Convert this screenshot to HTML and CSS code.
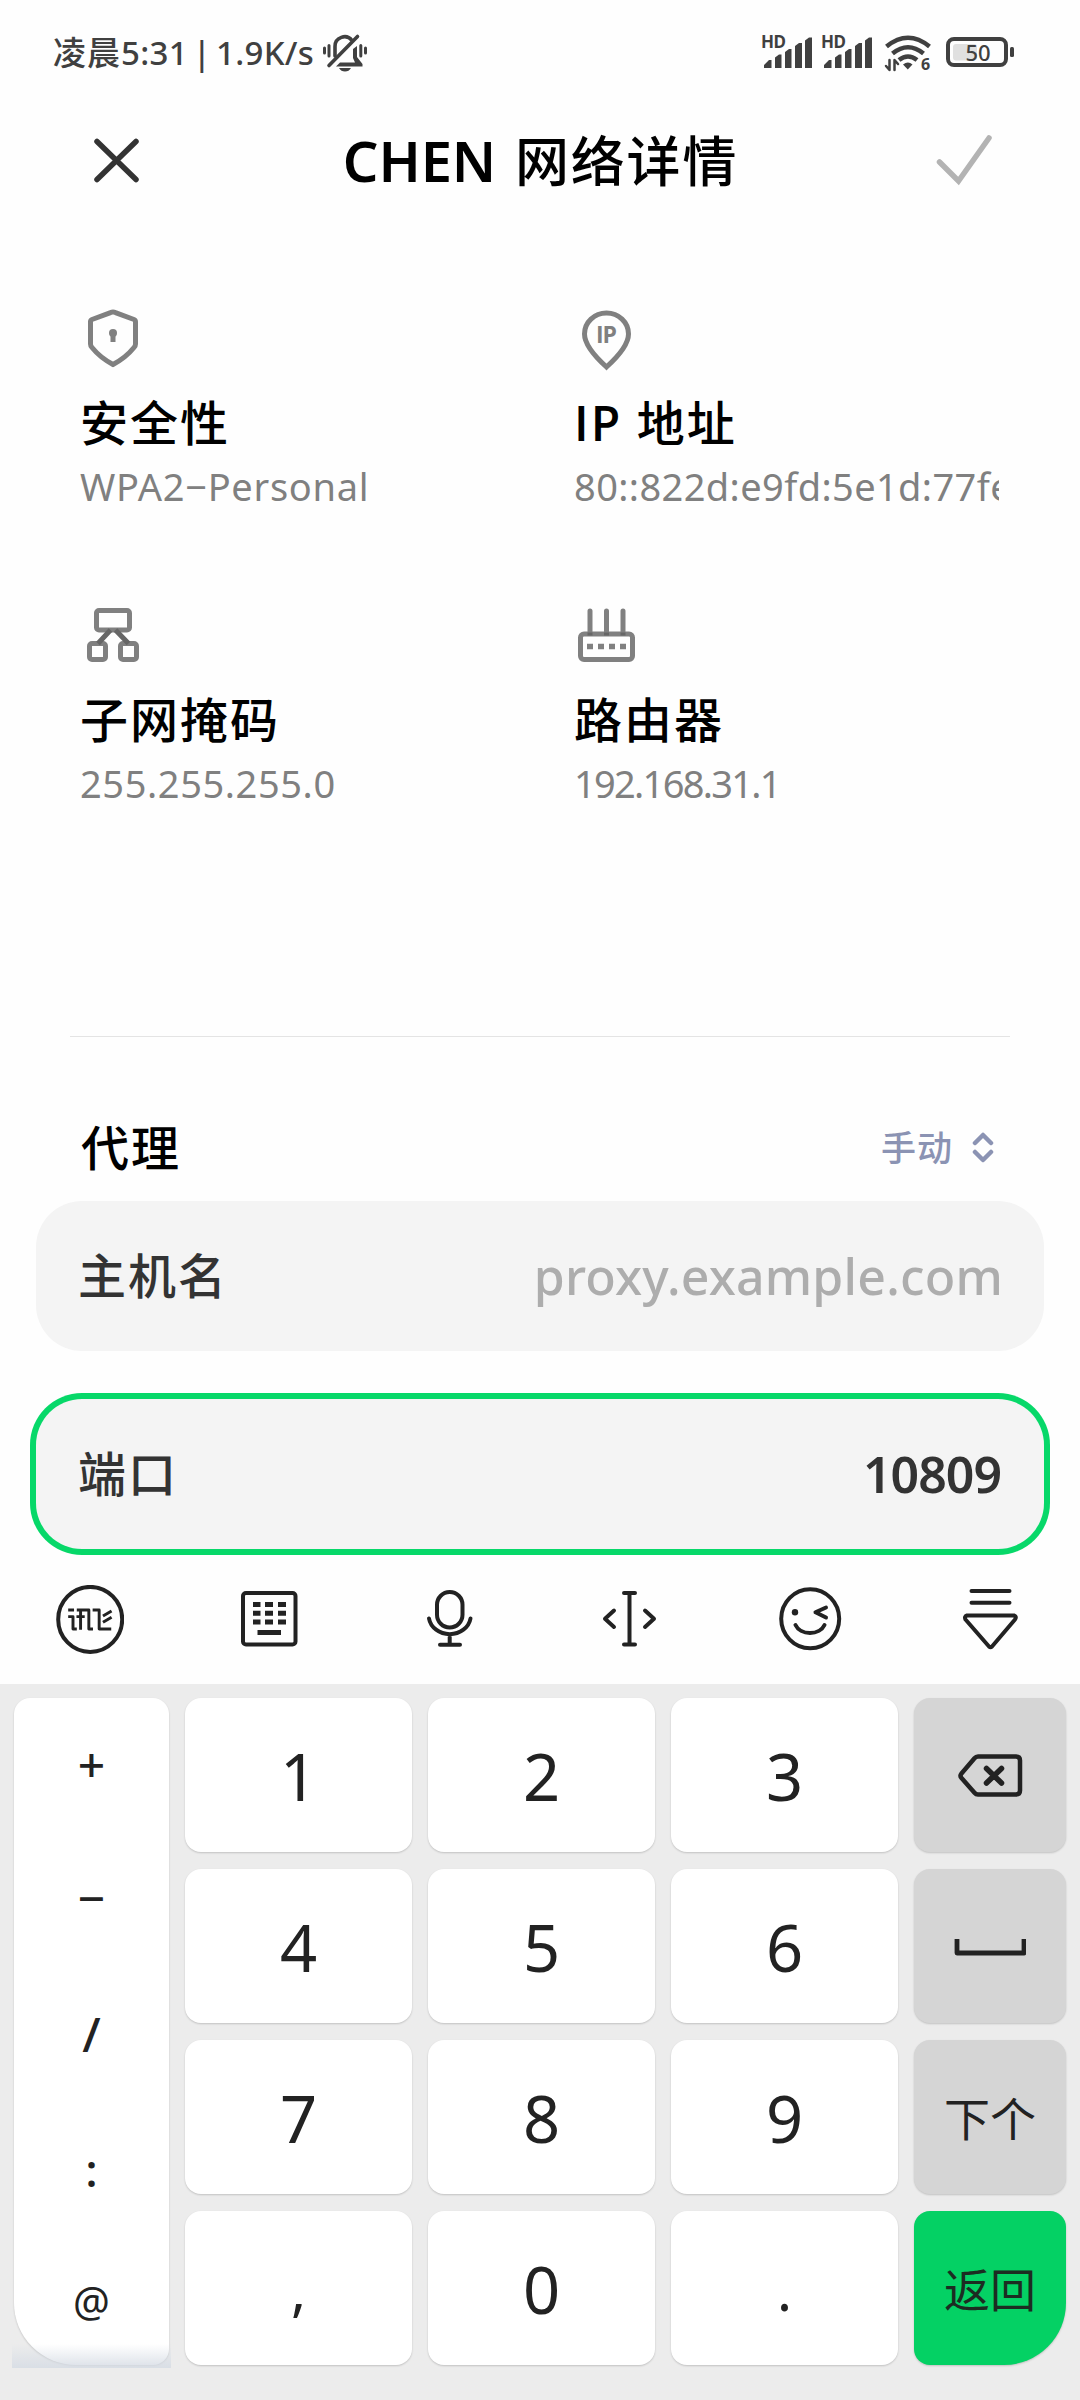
FILE: index.html
```html
<!DOCTYPE html>
<html lang="zh-CN">
<head>
<meta charset="utf-8">
<title>CHEN 网络详情</title>
<link rel="stylesheet" href="styles.css">
</head>
<body>
<header class="status">
  <span class="status-time">凌晨<span class="clock">5:31 | 1.9K/s</span></span>
  <svg class="bell" width="46" height="42" viewBox="322 32 46 42">
    <path d="M324.500 48v5M329 45.500v10.500M365.500 48v5M360.800 45.500v10.500" class="ln" stroke-width="3"/>
    <path d="M335 56V46.500a9.500 9.500 0 0 1 17-6" class="ln thick"/>
    <path d="M329 65.500 357.500 36.500" class="ln thick"/>
    <path d="M353 49l4-3v11l5.500 7v2.500H336l4-4h15L353 58z" class="fl"/>
    <path d="M339 68h12q-2 3.500-6 3.500t-6-3.500z" class="fl"/>
  </svg>
  <svg class="signals" width="262" height="42" viewBox="758 32 262 42">
    <g id="sim">
      <text x="761" y="48" class="hd" textLength="25">HD</text>
      <path class="fl" d="M764 68v-3l5-5h2.500v8zM775 68V57.500l4-3h2.500V68zM785 68V52l4-3h2.500v19zM795 68V46l4-3h3v25zM805 68V40.500l4-3h3V68z"/>
    </g>
    <use href="#sim" x="60"/>
    <g class="ln wifi">
      <path d="M886.500 46.500q21.500-17.500 43 0"/>
      <path d="M892.500 53.500q15.500-12.500 31 0"/>
      <path d="M899 60q9-7 18 0"/>
    </g>
    <path class="fl" d="M903 64.500q5-4 9.500 0l-4.700 5z"/>
    <path class="ln" stroke-width="2.500" stroke-linecap="butt" d="M889.500 60v10l-3.500-4M894.500 70V60l3.500 4"/>
    <text x="921" y="70" class="six">6</text>
    <rect x="948" y="39" width="58" height="26" rx="6" class="ln" stroke-width="4"/>
    <rect x="953" y="44" width="24" height="16.500" rx="3" fill="#e0e0e0"/>
    <text x="978" y="60.500" class="pct" text-anchor="middle">50</text>
    <rect x="1010" y="47" width="4" height="10" rx="1.500" class="fl"/>
  </svg>
</header>

<nav class="titlebar">
  <svg width="50" height="52" viewBox="92 134 50 52"><path d="M97 141.500 136 179.500M136 141.500 97 179.500" fill="none" stroke="#333" stroke-width="5.500" stroke-linecap="round"/></svg>
  <h1><span class="name">CHEN</span> 网络详情</h1>
  <svg width="60" height="54" viewBox="934 133 60 54"><path d="M939.500 162 958.500 181 989 138" fill="none" stroke="#b3b3b3" stroke-width="5.500" stroke-linecap="round"/></svg>
</nav>

<main class="info">
  <section class="item">
    <svg width="64" height="60" viewBox="80 308 64 60" class="ico">
      <path d="M110.500 312.600q2.500-1.200 5 0L134 319.500q1.500.6 1.500 2.300V344q0 2-1.500 3.500-8 10-21 17-13-7-21-17-1.500-1.500-1.500-3.500V321.800q0-1.700 1.500-2.300z"/>
      <circle cx="113" cy="333" r="4" class="solid"/><path d="M113 334v8"/>
    </svg>
    <h2>安全性</h2>
    <p class="wpa">WPA2−Personal</p>
  </section>
  <section class="item">
    <svg width="64" height="60" viewBox="574 308 64 60" class="ico">
      <path d="M606.500 367q22-20 22-33a22 21 0 0 0-44 0q0 13 22 33z"/>
      <text x="596" y="343" class="iptxt" textLength="21">IP</text>
    </svg>
    <h2><span class="lat">IP</span> 地址</h2>
    <p class="ip6">80::822d:e9fd:5e1d:77fe</p>
  </section>
  <section class="item">
    <svg width="64" height="60" viewBox="80 605 64 60" class="ico">
      <rect x="96.500" y="610.500" width="33" height="19.500" rx="2.500"/>
      <rect x="89.500" y="643.500" width="16" height="16" rx="2.500"/>
      <rect x="120.500" y="643.500" width="16" height="16" rx="2.500"/>
      <path d="M110.500 630 98 643.500M115.500 630 128.500 643.500" class="over"/>
    </svg>
    <h2>子网掩码</h2>
    <p class="mask">255.255.255.0</p>
  </section>
  <section class="item">
    <svg width="64" height="60" viewBox="574 605 64 60" class="ico">
      <rect x="580.500" y="634" width="52" height="25.500" rx="3.500"/>
      <path d="M590 611v20.500M606.500 611v20.500M623 611v20.500" stroke-linecap="round"/>
      <path d="M587 646.500h6M598 646.500h6M609 646.500h6M620 646.500h6" stroke-width="5.500"/>
      <path d="M587.500 634h5M604 634h5M620.500 634h5" class="over" stroke-width="3"/>
    </svg>
    <h2>路由器</h2>
    <p class="gw">192.168.31.1</p>
  </section>
</main>

<section class="proxy">
  <div class="proxy-head">
    <h2>代理</h2>
    <div class="select">手动
      <svg width="22" height="32" viewBox="972 1131 22 32"><path d="M975 1142 983 1134 991 1142M975 1151 983 1159 991 1151" fill="none" stroke="#8b93b3" stroke-width="4.500" stroke-linecap="round" stroke-linejoin="round"/></svg>
    </div>
  </div>
  <div class="field"><label>主机名</label><span class="hint">proxy.example.com</span></div>
  <div class="field focus"><label>端口</label><span class="port">10809</span></div>
</section>

<div class="tools">
  <svg viewBox="56 1585 68 70" width="68" height="70">
    <ellipse cx="90.200" cy="1619.400" rx="32" ry="32.500"/>
    <g transform="translate(0 1560) scale(.34435 .33333)" stroke-width="8.500" stroke-linecap="butt">
      <path d="M198 150h17M198 170h14v37h11M223 150h35v57h12M234 150v59M222 170h24M269 150h19v57h35M299 168l25-15M299 187l25-15"/>
    </g>
  </svg>
  <svg viewBox="236 1585 68 70" width="68" height="70">
    <rect x="243" y="1593" width="52.500" height="51.500" rx="3"/>
    <path stroke-width="5" stroke-linecap="butt" d="M253 1604.500h7.500M265 1604.500h8M278 1604.500h8M253 1613.200h7.500M265 1613.200h8M278 1613.200h8M253 1622h7.500M265 1622h8M278 1622h8M257.500 1632.500H281"/>
  </svg>
  <svg viewBox="416 1585 68 70" width="68" height="70">
    <rect x="437" y="1592" width="25.500" height="35.500" rx="12.750"/>
    <path d="M429 1618.500a21 18.500 0 0 0 41.500 0M449.700 1637v7.500M440 1644.800h20"/>
  </svg>
  <svg viewBox="595.500 1585 68 70" width="68" height="70">
    <path d="M629 1593v51.500M623.500 1593h11M623.500 1644.500h11M613.500 1610.500 604.500 1618.800 613.500 1627M644.500 1610.500 653.500 1618.800 644.500 1627"/>
  </svg>
  <svg viewBox="776 1585 68 70" width="68" height="70">
    <ellipse cx="810.200" cy="1618.700" rx="29" ry="29.500"/>
    <circle cx="795" cy="1612.300" r="3.200" fill="#222" stroke="none"/>
    <path d="M826 1607.500 815.500 1612.300 826 1617.500M795.500 1625a15.500 12.500 0 0 0 29 0"/>
  </svg>
  <svg viewBox="956 1585 68 70" width="68" height="70">
    <path d="M971.500 1591h38M971.500 1602.800h38M967 1615.500h47q3 1 1 4L992 1646.500q-1.500 1.500-3 0L965.500 1619.500q-1.500-3 1.500-4z"/>
  </svg>
</div>

<div class="keyboard">
  <div class="symbols"><span>+</span><span>−</span><span>/</span><span class="colon">:</span><span class="at">@</span></div>
  <button>1</button><button>2</button><button>3</button>
  <button class="fn"><svg width="70" height="50" viewBox="955 1750 70 50"><path d="M978 1755.500h38q4 0 4 4v30q0 4-4 4h-38q-2 0-3.500-1.800L961.500 1777q-2-2.300 0-4.600L974.500 1757.300q1.500-1.800 3.500-1.800z"/><path d="M986.500 1767.500l15 14.500M1001.500 1767.500l-15 14.500" stroke-width="5.500"/></svg></button>
  <button>4</button><button>5</button><button>6</button>
  <button class="fn"><svg width="72" height="22" viewBox="954 1935 72 22"><path d="M957 1938v14h67v-14" stroke-width="4.800" stroke-linecap="butt"/></svg></button>
  <button>7</button><button>8</button><button>9</button>
  <button class="fn">下个</button>
  <button class="punct">,</button><button>0</button><button class="punct">.</button>
  <button class="fn enter">返回</button>
</div>
</body>
</html>
```

FILE: styles.css
```css
* { box-sizing: border-box; margin: 0; padding: 0; }
body {
  width: 1080px;
  height: 2400px;
  overflow: hidden;
  background: #fefefe;
  font-family: "Noto Sans", "Noto Sans CJK SC", sans-serif;
  display: flex;
  flex-direction: column;
}
svg { display: block; flex: none; }
h1, h2 { font-weight: 500; color: #000; white-space: pre; }

/* status bar */
.status {
  height: 104px;
  padding: 32px 60px 0 53px;
  display: flex;
  color: #404040;
}
.status-time { width: 269px; flex: none; font-size: 33px; line-height: 42px; font-weight: 500; letter-spacing: 1px; white-space: nowrap; }
.clock { letter-spacing: .3px; word-spacing: -4px; }
.signals { margin-left: auto; overflow: visible; }
.ln { fill: none; stroke: #404040; stroke-linecap: round; stroke-linejoin: round; }
.thick { stroke-width: 3.6; }
.wifi { stroke-width: 4.6; stroke-linecap: butt; }
.fl { fill: #404040; }
.status text { fill: #404040; }
.hd { font-size: 17px; font-weight: 700; }
.six { font-size: 16px; font-weight: 700; }
.pct { font-size: 22px; font-weight: 500; }

/* title bar */
.titlebar {
  height: 112px;
  padding: 0 86px 0 92px;
  display: flex;
  align-items: center;
  justify-content: space-between;
}
h1 { padding-left: 5px; font-size: 54px; line-height: 80px; letter-spacing: 1.8px; word-spacing: 3px; }
.name { font-size: 56px; font-weight: 600; letter-spacing: -.1px; }

/* network details */
.info {
  margin-top: 92px;
  padding-left: 80px;
  height: 728px;
  display: grid;
  grid-template-columns: 494px 425px;
  grid-auto-rows: 203px;
  row-gap: 94px;
}
.item { overflow: hidden; }
.ico { fill: none; stroke: #808080; stroke-width: 5; overflow: visible; }
.ico .solid { fill: #808080; stroke: none; }
.ico .over { stroke: #666; }
.iptxt { fill: #808080; stroke: none; font: 700 23px "Open Sans", sans-serif; }
.lat { font-family: "Open Sans", sans-serif; font-weight: 600; }
h2 { font-size: 48px; line-height: 60px; letter-spacing: 2px; }
.item h2 { margin: 25px 0 8px; }
.item p { font-size: 38px; line-height: 50px; color: #808080; white-space: nowrap; }
.item .wpa { letter-spacing: .7px; }
.item .mask { letter-spacing: .6px; }
.item .gw { letter-spacing: -1.7px; }
.item .ip6 { letter-spacing: .4px; }

/* proxy settings */
.proxy {
  height: 519px;
  padding: 0 36px;
}
.proxy-head {
  margin: 0 34px;
  padding: 81px 16px 23px 11px;
  height: 165px;
  border-top: 1px solid #e4e4e4;
  display: flex;
  justify-content: space-between;
  align-items: center;
}
.select { display: flex; align-items: center; gap: 19px; font-size: 35px; line-height: 50px; letter-spacing: 1px; font-weight: 500; color: #8b93b3; }
.field {
  height: 150px;
  padding: 0 41px 0 42px;
  border-radius: 46px;
  background: #f4f4f4;
  color: #333;
  display: flex;
  align-items: center;
  justify-content: space-between;
  font-size: 48px;
  font-weight: 500;
  line-height: 60px;
}
.field label { letter-spacing: 2px; }
.focus { margin-top: 48px; box-shadow: 0 0 0 6px #07d869; }
.hint { color: #adadad; font-size: 50px; letter-spacing: .2px; }
.port { font-size: 50px; font-weight: 600; letter-spacing: -1px; padding-right: 2px; }

/* keyboard */
.tools {
  height: 129px;
  display: grid;
  grid-template-columns: repeat(6, 180px);
  justify-items: center;
  padding-top: 30px;
}
.tools svg { fill: none; stroke: #222; stroke-width: 4; stroke-linecap: round; stroke-linejoin: round; }
.keyboard {
  flex: 1;
  background: #ececec;
  padding: 14px 14px 0 14px;
  display: grid;
  grid-template-columns: 155px 227px 227px 227px 152px;
  grid-template-rows: repeat(4, 154px);
  gap: 17px 16px;
  color: #222;
}
button, .symbols {
  border: 0;
  border-radius: 16px;
  background: #fff;
  box-shadow: 0 1px 2px rgba(0, 0, 0, .18);
}
button {
  padding-top: 1px;
  font: 400 65px/90px "Noto Sans", "Noto Sans CJK SC", sans-serif;
  color: #222;
  display: flex;
  align-items: center;
  justify-content: center;
}
.fn { background: #d5d5d5; font-size: 46px; padding: 1px 0 0; }
.fn svg { fill: none; stroke: #222; stroke-width: 4.5; stroke-linecap: round; stroke-linejoin: round; }
.enter { background: #04d164; border-bottom-right-radius: 62px; color: #1c2c22; }
.punct { font-size: 56px; }
.symbols {
  position: relative;
  grid-row: span 4;
  border-bottom-left-radius: 62px;
  display: grid;
  grid-template-rows: 130px 138px 134px 134px 134px;
  justify-items: center;
  align-items: center;
  font-size: 48px;
  font-weight: 500;
}
.symbols .colon { font-size: 46px; padding-top: 4px; }
.symbols .at { font-size: 41px; font-weight: 400; }
.symbols::after {
  content: "";
  position: absolute;
  left: -2px;
  right: -2px;
  bottom: -3px;
  height: 24px;
  background: linear-gradient(rgba(215, 221, 229, 0), rgba(215, 221, 229, .9));
}
```
